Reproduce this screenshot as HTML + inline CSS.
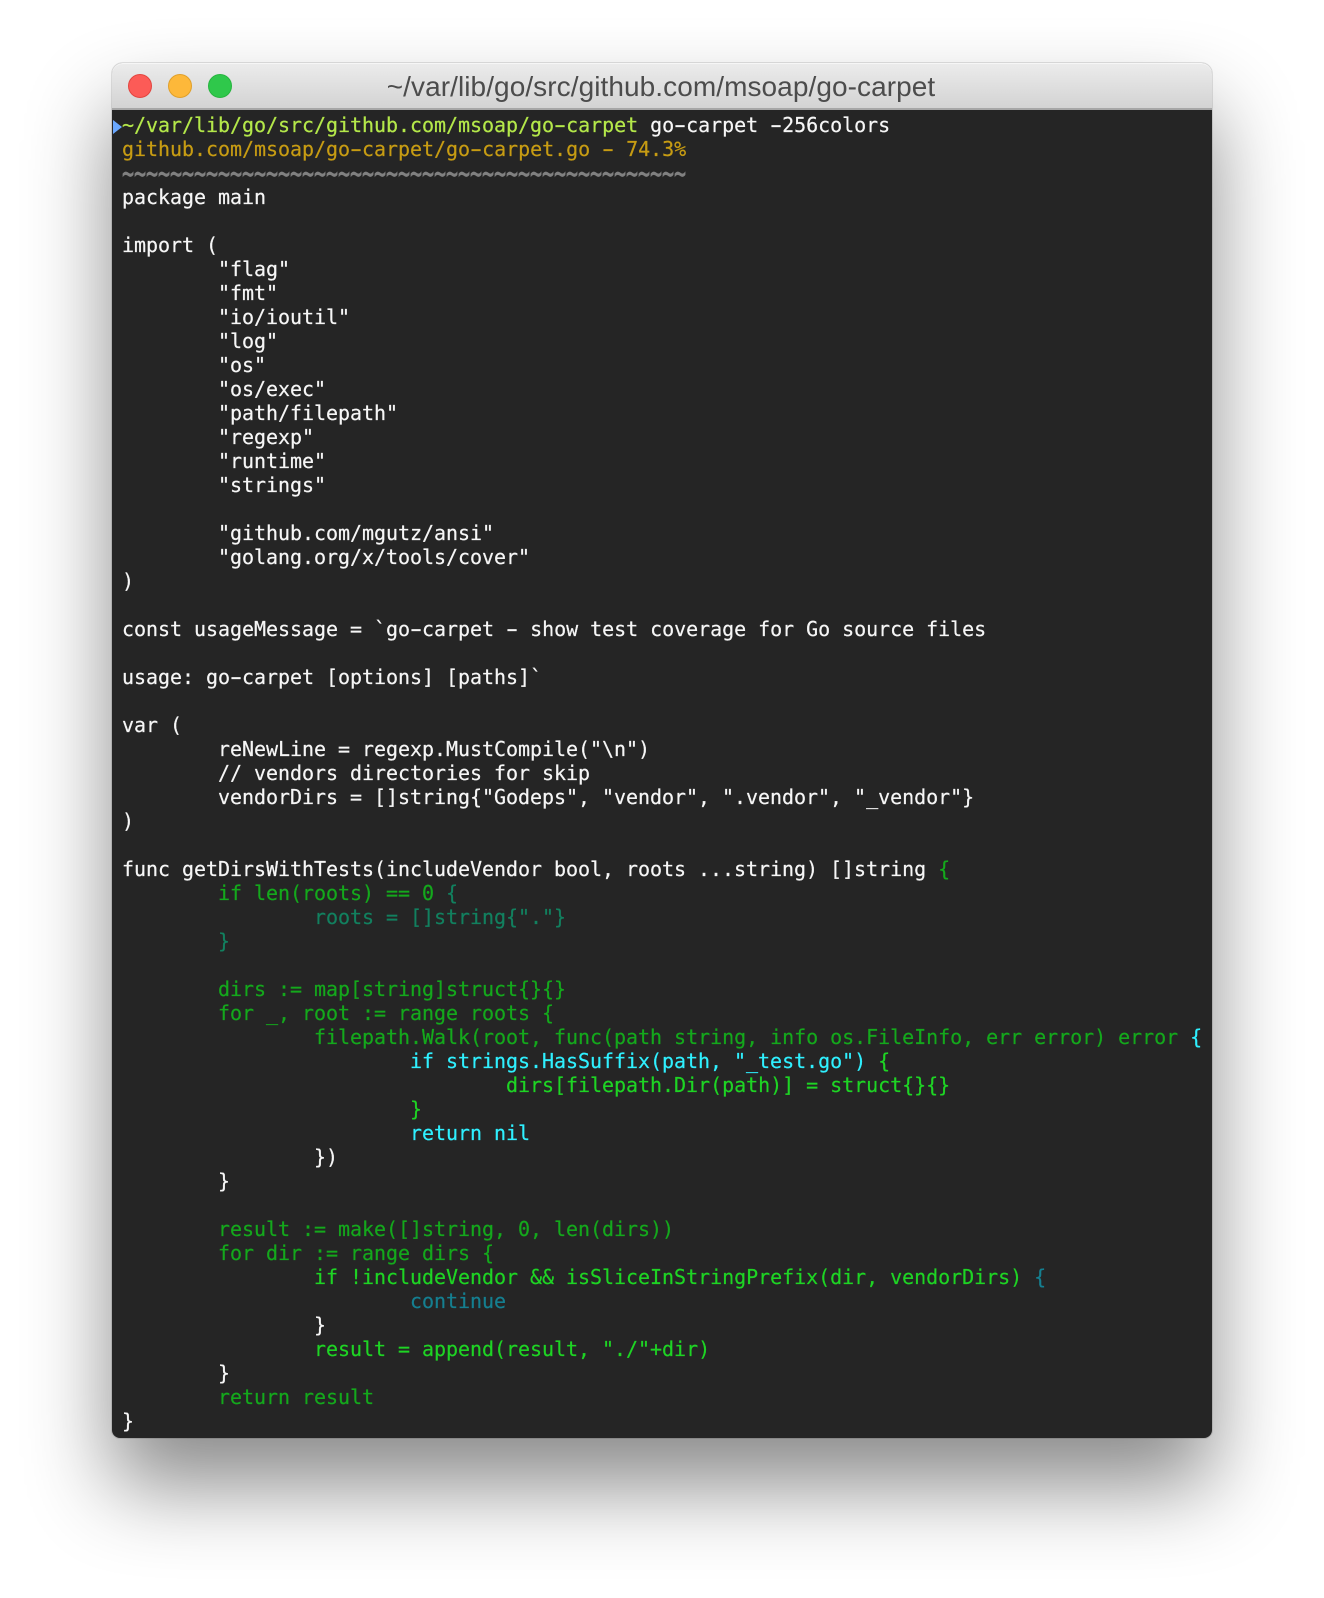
<!DOCTYPE html>
<html lang="en">
<head>
<meta charset="utf-8">
<title>go-carpet</title>
<style>
html,body{margin:0;padding:0;background:#fff;}
body{width:1324px;height:1598px;overflow:hidden;position:relative;}
#win{position:absolute;left:112px;top:63px;width:1100px;height:1375px;border-radius:11px 11px 8px 8px;background:#252525;box-shadow:0 48px 84px rgba(0,0,0,.46),0 0 0 1px rgba(0,0,0,.11);}
#bar{position:absolute;left:0;top:0;right:0;height:45px;border-radius:11px 11px 0 0;background:linear-gradient(#ececec,#d3d3d3);border-bottom:2px solid #a6a6a6;box-shadow:inset 0 1px 0 #f6f6f6;}
.l{position:absolute;top:11px;width:22px;height:22px;border-radius:50%;border:1px solid;}
#title{position:absolute;left:-2px;right:0;top:8px;text-align:center;font:28px/32px "Liberation Sans",sans-serif;letter-spacing:.07px;color:#4c4c4c;}
#t{position:absolute;left:10px;top:50px;margin:0;font:20px/24px "DejaVu Sans Mono",monospace;letter-spacing:-.04px;color:#f6f6f6;white-space:pre;-webkit-text-stroke:.2px currentColor;}
#tri{position:absolute;left:1px;top:57px;}
.y{color:#b4e84a}.o{color:#c79c13}.w{display:inline-block;transform:scaleY(1.6);color:#808080;-webkit-text-stroke:.4px #808080}
.d{color:#14a81c}.g{color:#1ed424}.e{color:#12805f}.b{color:#157f90}.c{color:#2ff0ff}
.h{display:inline-block;transform:scaleX(1.75);}
</style>
</head>
<body>
<div id="win">
<div id="bar">
<div class="l" style="left:16px;background:#fc5b57;border-color:#e2453f"></div>
<div class="l" style="left:56px;background:#fdb83a;border-color:#e0a02a"></div>
<div class="l" style="left:96px;background:#2fc84b;border-color:#27b53f"></div>
<div id="title">~/var/lib/go/src/github.com/msoap/go-carpet</div>
</div>
<svg id="tri" width="10" height="14" viewBox="0 0 10 14"><polygon points="0,0 9,7 0,14" fill="#6aa8ff"/></svg>
<pre id="t"><span class="y">~/var/lib/go/src/github.com/msoap/go<span class="h">-</span>carpet</span> go<span class="h">-</span>carpet <span class="h">-</span>256colors
<span class="o">github.com/msoap/go<span class="h">-</span>carpet/go<span class="h">-</span>carpet.go <span class="h">-</span> 74.3%</span>
<span class="w">~~~~~~~~~~~~~~~~~~~~~~~~~~~~~~~~~~~~~~~~~~~~~~~</span>
package main

import (
        "flag"
        "fmt"
        "io/ioutil"
        "log"
        "os"
        "os/exec"
        "path/filepath"
        "regexp"
        "runtime"
        "strings"

        "github.com/mgutz/ansi"
        "golang.org/x/tools/cover"
)

const usageMessage = `go<span class="h">-</span>carpet <span class="h">-</span> show test coverage for Go source files

usage: go<span class="h">-</span>carpet [options] [paths]`

var (
        reNewLine = regexp.MustCompile("\n")
        // vendors directories for skip
        vendorDirs = []string{"Godeps", "vendor", ".vendor", "_vendor"}
)

func getDirsWithTests(includeVendor bool, roots ...string) []string <span class="d">{</span>
        <span class="d">if len(roots) == 0 </span><span class="e">{</span>
                <span class="e">roots = []string{"."}</span>
        <span class="e">}</span>

        <span class="d">dirs := map[string]struct{}{}</span>
        <span class="d">for _, root := range roots {</span>
                <span class="d">filepath.Walk(root, func(path string, info os.FileInfo, err error) error </span><span class="c">{</span>
                        <span class="c">if strings.HasSuffix(path, "_test.go") </span><span class="g">{</span>
                                <span class="g">dirs[filepath.Dir(path)] = struct{}{}</span>
                        <span class="g">}</span>
                        <span class="c">return nil</span>
                })
        }

        <span class="d">result := make([]string, 0, len(dirs))</span>
        <span class="d">for dir := range dirs {</span>
                <span class="g">if !includeVendor &amp;&amp; isSliceInStringPrefix(dir, vendorDirs) </span><span class="b">{</span>
                        <span class="b">continue</span>
                }
                <span class="g">result = append(result, "./"+dir)</span>
        }
        <span class="d">return result</span>
}</pre>
</div>
</body>
</html>
